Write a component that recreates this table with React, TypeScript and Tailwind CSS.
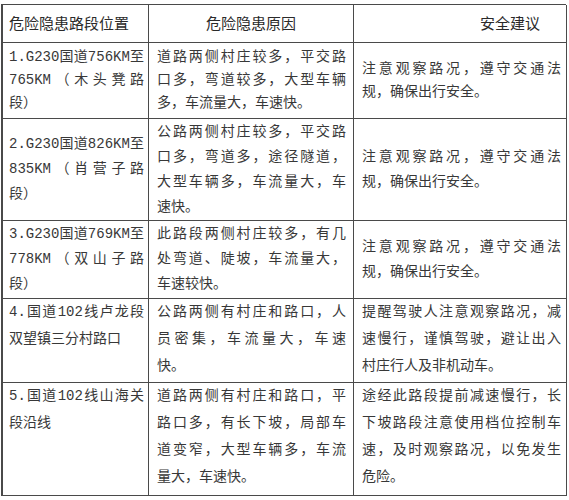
type Cell = { lines: string[]; mid?: boolean; pad: string };
type Row = { h: string; lh: string; cells: Cell[] };

const c1 = "pl-[6px] pr-[4px]";
const c2 = "pl-[8px] pr-[7px]";
const c3 = "pl-[8px] pr-[5px]";

const rows: Row[] = [
  {
    h: "h-[76px]",
    lh: "leading-[23px]",
    cells: [
      { lines: ["1.G230国道756KM至", "765KM（木头凳路", "段）"], mid: true, pad: c1 },
      { lines: ["道路两侧村庄较多，平交路", "口多，弯道较多，大型车辆", "多，车流量大，车速快。"], mid: true, pad: c2 },
      { lines: ["注意观察路况，遵守交通法", "规，确保出行安全。"], mid: true, pad: c3 },
    ],
  },
  {
    h: "h-[102px]",
    lh: "leading-[25px]",
    cells: [
      { lines: ["2.G230国道826KM至", "835KM（肖营子路", "段）"], mid: true, pad: c1 },
      { lines: ["公路两侧村庄较多，平交路", "口多，弯道多，途径隧道，", "大型车辆多，车流量大，车", "速快。"], mid: true, pad: c2 },
      { lines: ["注意观察路况，遵守交通法", "规，确保出行安全。"], mid: true, pad: c3 },
    ],
  },
  {
    h: "h-[78px]",
    lh: "leading-[25px]",
    cells: [
      { lines: ["3.G230国道769KM至", "778KM（双山子路", "段）"], mid: true, pad: c1 },
      { lines: ["此路段两侧村庄较多，有几", "处弯道、陡坡，车流量大，", "车速较快。"], mid: true, pad: c2 },
      { lines: ["注意观察路况，遵守交通法", "规，确保出行安全。"], mid: true, pad: c3 },
    ],
  },
  {
    h: "h-[84px]",
    lh: "leading-[27px]",
    cells: [
      { lines: ["4.国道102线卢龙段", "双望镇三分村路口"], pad: c1 },
      { lines: ["公路两侧有村庄和路口，人", "员密集，车流量大，车速", "快。"], pad: c2 },
      { lines: ["提醒驾驶人注意观察路况，减", "速慢行，谨慎驾驶，避让出入", "村庄行人及非机动车。"], pad: c3 },
    ],
  },
  {
    h: "h-[113px]",
    lh: "leading-[27px]",
    cells: [
      { lines: ["5.国道102线山海关", "段沿线"], pad: c1 },
      { lines: ["道路两侧有村庄和路口，平", "路口多，有长下坡，局部车", "道变窄，大型车辆多，车流", "量大，车速快。"], pad: c2 },
      { lines: ["途经此路段提前减速慢行，长", "下坡路段注意使用档位控制车", "速，及时观察路况，以免发生", "危险。"], pad: c3 },
    ],
  },
];

const body = "font-['Liberation_Mono','Noto_Sans_CJK_SC',monospace] text-[14px] text-[#383838]";
const head = "font-['Noto_Sans_CJK_SC',sans-serif] text-[15px] text-[#2a2a2a]";

export default function App() {
  return (
    <div lang="zh-CN" className="min-h-[500px] w-[569px] bg-white pl-[1px] pt-[4px]">
      <div className="grid w-[565px] grid-cols-[146px_205px_213px] border-l-2 border-t border-[#4a4a4a]">
        <div className={`flex h-[38px] items-center border-b border-r border-[#4a4a4a] pl-[6px] ${head}`}>危险隐患路段位置</div>
        <div className={`flex h-[38px] items-center justify-center border-b border-r border-[#4a4a4a] ${head}`}>危险隐患原因</div>
        <div className={`flex h-[38px] items-center justify-end border-b border-r border-[#4a4a4a] pr-[26px] ${head}`}>安全建议</div>
        {rows.map((row, ri) =>
          row.cells.map((cell, ci) => (
            <div
              key={`${ri}-${ci}`}
              className={`flex flex-col border-b border-r border-[#4a4a4a] ${row.h} ${row.lh} ${cell.pad} ${body} ${cell.mid ? "justify-center" : "justify-start"}`}
            >
              {cell.lines.map((line, li) => (
                <div
                  key={li}
                  className={li < cell.lines.length - 1 ? "whitespace-nowrap text-justify [text-align-last:justify]" : "whitespace-nowrap"}
                >
                  {line}
                </div>
              ))}
            </div>
          ))
        )}
      </div>
    </div>
  );
}
